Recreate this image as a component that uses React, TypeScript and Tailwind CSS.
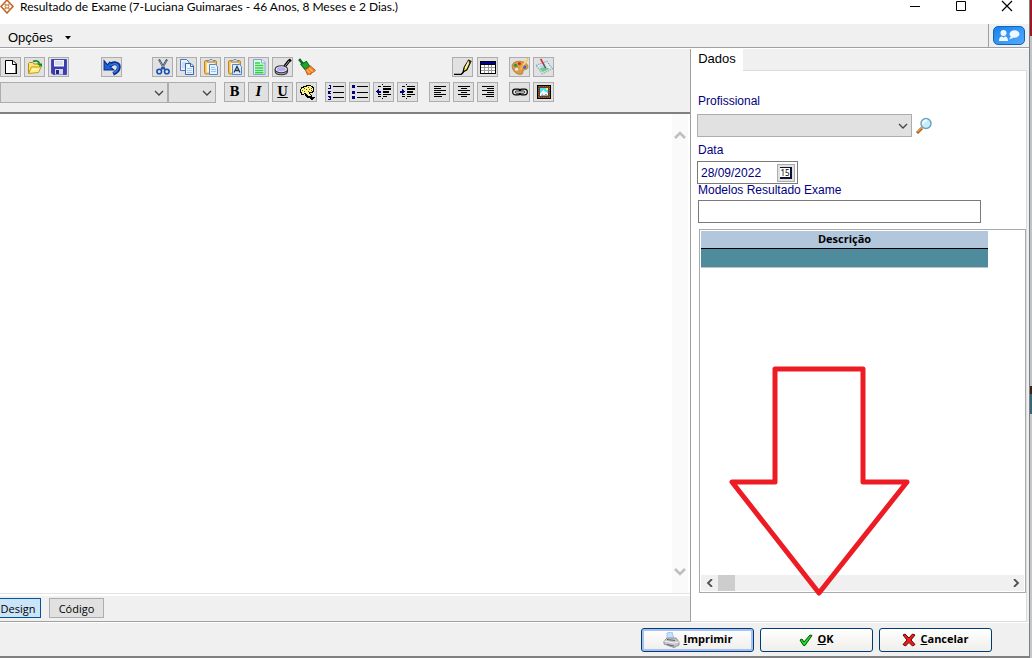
import React, { useState } from "react";
import type { ReactNode } from "react";

function Pic({ children, crisp = false, size = 16 }: { children: ReactNode; crisp?: boolean; size?: number }) {
  return (
    <svg width={size} height={size} viewBox="0 0 16 16" fill="none" aria-hidden="true" className="shrink-0" shapeRendering={crisp ? "crispEdges" : "auto"}>
      {children}
    </svg>
  );
}

function Chevron({ d, className }: { d: string; className?: string }) {
  return (
    <svg width="10" height="10" viewBox="0 0 10 10" fill="none" aria-hidden="true" className={className}>
      <path d={d} stroke="currentColor" strokeWidth="1.3" />
    </svg>
  );
}

const icons = {
  novo: (
    <Pic>
      <path d="M2.500 1.500h7.500l3.500 3.500v9.500h-11z" fill="#fff" stroke="#000" />
      <path d="M9.500 1.500v4h4M13 5v10M2 14.500h12" stroke="#000" />
    </Pic>
  ),
  abrir: (
    <Pic>
      <path d="M1.500 14V4.500l1-1h3l1.500 1.500h5.500v3" fill="#fbe577" stroke="#b98b10" />
      <path d="M1.500 14.500l3-6.500H14l-2.500 5.500z" fill="#fff08a" stroke="#c39a13" />
      <path d="M6 2.500c3-1.500 5.500-.5 6.500 2" stroke="#178a22" strokeWidth="1.800" />
      <path d="M9.500 4.500h5.500V8z" fill="#0d8a22" />
      <path d="M5 10.500h7" stroke="#fffbd0" />
    </Pic>
  ),
  salvar: (
    <Pic>
      <path d="M.5.500h15v15H2L.5 14z" fill="#3b3bb3" stroke="#4a4ab4" />
      <path d="M3 1h10v6.500H3z" fill="#f3f3fa" />
      <path d="M4 3h8M4 5h8" stroke="#c2c5d8" />
      <path d="M4 10h8v5.500H4z" fill="#d4d6e8" />
      <path d="M5 11h3v4H5z" fill="#24248b" />
    </Pic>
  ),
  desfazer: (
    <Pic size={18}>
      <path d="M5.500 7.500C9 2.800 14.500 4.500 14 8.500c-.2 2.500-2.500 4.500-5 5.500" stroke="#0a2f91" strokeWidth="3.400" />
      <path d="M1 2.500v8h8.500L6.500 8 9 6 6 3.500 4 6z" fill="#1762d6" stroke="#0a2f91" />
      <path d="M7 6.500c3-2.500 7-1.500 6.500 2-.3 2-2 3.800-4 4.800" stroke="#347fe5" strokeWidth="1.300" />
    </Pic>
  ),
  recortar: (
    <Pic>
      <path d="M4 .5l5.500 9.500M12 .5L6.500 10" stroke="#34425c" strokeWidth="2" />
      <path d="M4.500 1.500l4 7M11.500 1.500l-4 7" stroke="#a9b8cf" strokeWidth=".8" />
      <circle cx="4.200" cy="12.500" r="2.300" stroke="#1550b5" strokeWidth="1.600" />
      <circle cx="11.800" cy="12.500" r="2.300" stroke="#1550b5" strokeWidth="1.600" />
      <path d="M6 10.500l2-1.500 2 1.500" stroke="#1550b5" strokeWidth="1.500" />
    </Pic>
  ),
  copiar: (
    <Pic>
      <path d="M1.500.500h6l2.500 2.500v8.500h-8.500z" fill="#e9f3ff" stroke="#5277b6" />
      <path d="M3 4h4M3 6h4M3 8h4" stroke="#a9c6ee" />
      <path d="M6.500 4.500h5.500l2.500 2.500v8.500h-8z" fill="#eaf4ff" stroke="#3866ad" />
      <path d="M11.500 4.500V7.500h3" stroke="#3866ad" />
      <path d="M8 9.500h5M8 11.500h5M8 13.500h5" stroke="#a9cbf2" />
    </Pic>
  ),
  colar: (
    <Pic>
      <rect x="1.500" y="1.500" width="12" height="13.500" rx="1.500" fill="#f2bd50" stroke="#c08628" />
      <path d="M3.500 3.500h8v10h-8z" fill="#fff1ca" />
      <path d="M4.500 3V1.500h1.500L7 .500h2L10 1.500h1.500V3z" fill="#d9dce2" stroke="#81868f" />
      <path d="M6.500 5.500h6l2 2v8h-8z" fill="#e6f2ff" stroke="#5487c8" />
      <path d="M8 8.500h4M8 10.500h5M8 12.500h5" stroke="#9bc0eb" />
    </Pic>
  ),
  colarTexto: (
    <Pic>
      <rect x="1.500" y="1.500" width="12" height="13.500" rx="1.500" fill="#f2bd50" stroke="#c08628" />
      <path d="M3.500 3.500h8v10h-8z" fill="#fff1ca" />
      <path d="M4.500 3V1.500h1.500L7 .500h2L10 1.500h1.500V3z" fill="#d9dce2" stroke="#81868f" />
      <path d="M5.500 5.500h7l2 2v8h-9z" fill="#dcecff" stroke="#5487c8" />
      <path d="M7 13.500l3-6 3 6M8.500 11.500h3" stroke="#26384d" strokeWidth="1.300" />
    </Pic>
  ),
  documento: (
    <Pic>
      <path d="M2.500.500h8.500l3 3v12H2.500z" fill="#dff9e6" stroke="#7ba5d4" />
      <path d="M10.500.500v3.500H14" fill="#fff" stroke="#7ba5d4" />
      <path d="M4 4h5M4 6.500h8.500M4 9h8.500M4 11.500h8.500M4 13.700h8.500" stroke="#30d34a" strokeWidth="1.500" />
    </Pic>
  ),
  localizar: (
    <Pic size={18}>
      <path d="M9.500 7.500L13 3l2-1.500" stroke="#000" strokeWidth="2.600" />
      <path d="M10 7l3.500-4.500" stroke="#bbb" strokeWidth=".8" />
      <path d="M1 10v1.500c0 4.500 11 4.500 11 0V10" fill="#aaa5d0" stroke="#333" />
      <ellipse cx="6.500" cy="10" rx="5.500" ry="3.200" fill="#f0eefa" stroke="#333" strokeWidth=".9" />
      <ellipse cx="6.500" cy="10" rx="3.900" ry="1.900" fill="#b5afee" />
    </Pic>
  ),
  limpar: (
    <Pic size={18}>
      <path d="M1 1l4 5" stroke="#086a14" strokeWidth="2.200" />
      <path d="M2.500 5.500l5-2.500 3 4.500-4.500 2.500z" fill="#20a52d" stroke="#087519" />
      <path d="M6.500 10.500l4.500-3.500 4.500 4-1.800 1.500-1.700.5-.5 1.500-2-.2-1 .7z" fill="#f08628" stroke="#bf4b0c" strokeWidth=".8" />
      <path d="M8 10.500l2.500 3M10 9l3 3" stroke="#ffc36c" />
    </Pic>
  ),
  linha: (
    <Pic size={18}>
      <path d="M0 14.500h6.500l2-2" stroke="#000" strokeWidth="1.200" />
      <path d="M8 12.500L9 8.500l4-6.500 2 1-3.500 7.500z" fill="#f7e637" stroke="#000" />
      <path d="M12.500 1.500l3 1.500-1 2-2.700-1.500z" fill="#463018" />
      <path d="M10 9l3-6" stroke="#fffac1" />
    </Pic>
  ),
  tabela: (
    <Pic crisp>
      <path d="M0 2h16v13H0z" fill="#000" />
      <path d="M1 3h14v2H1z" fill="#00009b" />
      <path d="M1 6h14v8H1z" fill="#fff" />
      <path d="M4.500 6v8M8.500 6v8M11.500 6v8M1 8.500h14M1 11.500h14" stroke="#999" />
    </Pic>
  ),
  pintura: (
    <Pic size={18}>
      <path d="M1 7c0-3 4-4.500 8-4 4 .5 6.500 3 6 5.500-.4 2-3 1.500-4 2.500s.5 3-2 3.500C5 15 1 11.500 1 7z" fill="#d9994a" stroke="#b67c3a" strokeWidth=".8" />
      <circle cx="4" cy="6.500" r="1.500" fill="#289a42" />
      <circle cx="7.500" cy="5" r="1.300" fill="#d42320" />
      <circle cx="12" cy="8" r="1.500" fill="#3162c7" />
      <circle cx="5" cy="10" r="1.400" fill="#f5ede3" />
      <path d="M8 10.500L15 .5" stroke="#f0b541" strokeWidth="1.800" />
      <path d="M11 6l3.500-5" stroke="#ffe29a" />
    </Pic>
  ),
  desenho: (
    <Pic size={18}>
      <path d="M1 6.500l9.500-3.500 5 6.500-9 4.500z" fill="#d9edf6" stroke="#7791a0" strokeDasharray="1 1" />
      <path d="M4 9.500l4-2 5 2-6 3z" fill="#74c881" />
      <path d="M3.500 7l5-1.500 2 2-5 1.500z" fill="#a6dafa" />
      <path d="M5 .800l3.500 6.200" stroke="#c9303a" strokeWidth="1.500" />
      <path d="M8.500 7l.8 2" stroke="#3d3a3d" />
    </Pic>
  ),
  cores: (
    <Pic crisp>
      <path d="M4 2h3V1h5v1h2v1h1v5h-1v1h-3v1h1v1h1v2h-1v1H8v-1H7v-1H6v-2H5v1H2V9H1V5h1V3h2z" fill="#000" />
      <path d="M5 3h3V2h4v1h1v1h1v3h-1v1h-3v2h1v1h1v1H9v-1H8v-1H7V9H5v1H3V8H2V5h1V4h2z" fill="#fff683" />
      <path d="M5 4h1v1H5zM9 3h1v1H9zM12 4h1v1h-1zM3 6h1v1H3zM7 5h1v1H7zM10 5h1v1h-1zM5 7h1v1H5zM9 7h1v1H9zM12 6h1v1h-1z" fill="#5a4a10" />
      <path d="M10 13h6v1h-1v1h-1v1h-2v-1h-1v-1h-1z" fill="#000" />
    </Pic>
  ),
  numerada: (
    <Pic crisp>
      <path d="M1 1h1v3M0 4h3M0 7h2v1L0 9.500h3M0 12h2.500v1.500H1M2.500 13.500v2H0" stroke="#000080" />
      <path d="M5 2.500h11M5 8.500h11M5 13.500h11" stroke="#000" />
    </Pic>
  ),
  marcadores: (
    <Pic crisp>
      <path d="M0 1h3v3H0zM0 7h3v3H0zM0 12h3v3H0z" fill="#000080" />
      <path d="M5 2.500h11M5 8.500h11M5 13.500h11" stroke="#000" />
    </Pic>
  ),
  recuoMenos: (
    <Pic crisp>
      <path d="M0 7.500l3-3v2h2v2H3v2z" fill="#000080" />
      <path d="M2 2.500h3M7 2.500h8M2 10.500h3M7 10.500h8M2 12.500h3M7 12.500h4" stroke="#000" />
      <path d="M7 5h8M7 8h6" stroke="#000" strokeWidth="2" />
      <path d="M6 0h1v1H6zM6 14h1v1H6z" fill="#000" />
    </Pic>
  ),
  recuoMais: (
    <Pic crisp>
      <path d="M5 7.500l-3-3v2H0v2h2v2z" fill="#000080" />
      <path d="M2 2.500h3M7 2.500h8M2 10.500h3M7 10.500h8M2 12.500h3M7 12.500h4" stroke="#000" />
      <path d="M7 5h8M7 8h6" stroke="#000" strokeWidth="2" />
      <path d="M6 0h1v1H6zM6 14h1v1H6z" fill="#000" />
    </Pic>
  ),
  esquerda: <Pic crisp><path d="M2 2.500h12M2 4.500h7M2 6.500h12M2 8.500h7M2 10.500h12M2 12.500h8" stroke="#000" /></Pic>,
  centro: <Pic crisp><path d="M2 2.500h12M5 4.500h6M2 6.500h12M5 8.500h6M2 10.500h12M5 12.500h6" stroke="#000" /></Pic>,
  direita: <Pic crisp><path d="M2 2.500h12M7 4.500h7M2 6.500h12M7 8.500h7M2 10.500h12M6 12.500h8" stroke="#000" /></Pic>,
  vinculo: (
    <Pic>
      <rect x=".7" y="5.200" width="8" height="5.600" rx="2.500" stroke="#000" strokeWidth="1.200" />
      <rect x="7.300" y="5.200" width="8" height="5.600" rx="2.500" stroke="#000" strokeWidth="1.200" />
      <rect x="3.500" y="7" width="9" height="2.200" rx="1" fill="#fff" stroke="#000" strokeWidth=".9" />
    </Pic>
  ),
  imagem: (
    <Pic crisp>
      <path d="M1.500 1.500h13v13h-13z" fill="#54452c" stroke="#000" />
      <path d="M2.500 2.500h11v11h-11z" stroke="#b5532e" strokeDasharray="1 1" />
      <path d="M4 4h8v8H4z" fill="#50e1f3" />
      <path d="M4 10l3-4 2 2 1-1 2 3v2H4z" fill="#f5f5f5" />
      <path d="M4 12l2-2 2 1 2-2 2 3z" fill="#9aa39e" />
      <path d="M10 4h2v2h-2z" fill="#fff45e" />
    </Pic>
  ),
};

function Tool({ label, children, flat = false, onClick }: { label: string; children: ReactNode; flat?: boolean; onClick?: () => void }) {
  return (
    <button
      type="button"
      aria-label={label}
      title={label}
      onClick={onClick}
      className={flat ? "flex h-5 w-[21px] items-center justify-center" : "flex h-5 w-[21px] items-center justify-center border border-[#adadad] bg-[#e1e1e1] text-black"}
    >
      {children}
    </button>
  );
}

function Group({ children }: { children: ReactNode }) {
  return <div className="flex shrink-0 gap-[3px]">{children}</div>;
}

function Drop({ label, id, className }: { label?: string; id: string; className: string }) {
  return (
    <div className={"relative " + className}>
      <select id={id} aria-label={label} className="block h-full w-full appearance-none border border-[#adadad] bg-[#e1e1e1] px-1 text-xs" defaultValue="">
        <option value=""></option>
      </select>
      <Chevron d="M1 3l4 4 4-4" className="pointer-events-none absolute inset-y-0 right-1 my-auto text-[#444]" />
    </div>
  );
}

const actionClass = "flex h-6 w-[113px] items-center justify-center gap-1 rounded-[3px] border border-[#003c74] bg-gradient-to-b from-white to-[#efeeea] font-['Open_Sans','Noto_Sans',sans-serif] text-[11px] font-bold text-black";

export default function App() {
  const [date, setDate] = useState("28/09/2022");
  const [text, setText] = useState("");
  return (
    <div className="flex min-h-screen bg-[#f0f0f0] font-['Liberation_Sans',Arial,sans-serif] text-black">
      <div className="flex min-w-0 flex-1 flex-col border-r border-b-2 border-[#808080]">
        <header className="flex h-6 shrink-0 items-start justify-between bg-white">
          <div className="flex items-center gap-1">
            <svg width="16" height="14" viewBox="0 0 16 14" fill="none" aria-hidden="true">
              <path d="M7 0l6 6.500L7 13 1 6.500z" stroke="#bd6023" strokeWidth="1.500" />
              <path d="M4 3l6 7M10 3l-6 7" stroke="#d98a4e" strokeWidth="1.400" />
              <path d="M7 4.500l2 2-2 2-2-2z" fill="#fff" stroke="#bd6023" />
            </svg>
            <h1 className="font-['Lato','Open_Sans',sans-serif] text-xs leading-[14px]">Resultado de Exame (7-Luciana Guimaraes - 46 Anos, 8 Meses e 2 Dias.)</h1>
          </div>
          <div className="flex gap-[34px] pr-4">
            <button type="button" aria-label="Minimizar">
              <svg width="12" height="12" viewBox="0 0 12 12"><path d="M1 6.500h10" stroke="#000" /></svg>
            </button>
            <button type="button" aria-label="Maximizar">
              <svg width="12" height="12" viewBox="0 0 12 12"><path d="M1.500 1.500h9v9h-9z" fill="none" stroke="#000" /></svg>
            </button>
            <button type="button" aria-label="Fechar">
              <svg width="12" height="12" viewBox="0 0 12 12"><path d="M1 1l10 10M11 1L1 11" stroke="#000" strokeWidth="1.200" /></svg>
            </button>
          </div>
        </header>

        <nav className="flex h-6 shrink-0 items-center justify-between border-b border-[#a0a0a0]">
          <button type="button" className="flex items-center gap-3 pt-1 pl-2 text-[13px] leading-4">
            Opções
            <svg width="6" height="4" viewBox="0 0 6 4" aria-hidden="true"><path d="M0 0h6L3 3.500z" fill="#000" /></svg>
          </button>
          <div className="flex h-full items-center border-l border-[#a0a0a0] pr-1 pl-1">
            <button type="button" aria-label="Suporte" className="flex h-[19px] w-8 items-center justify-center rounded-[5px] border border-[#0867c2] bg-gradient-to-br from-[#1681e8] to-[#52aaff]">
              <svg width="24" height="14" viewBox="0 0 24 14" fill="#eef8ff" aria-hidden="true">
                <circle cx="6.500" cy="4" r="3" />
                <path d="M2 12c0-3 1-4.500 3-4.500l1.500 1L8 7.500c2 0 3 1.500 3 4.500z" />
                <ellipse cx="17.500" cy="5" rx="5" ry="3.700" />
                <path d="M14 7l-2 3.500 5-2z" />
              </svg>
            </button>
          </div>
        </nav>

        <main className="flex flex-1 border-t border-white">
          <section className="flex min-w-0 flex-1 flex-col border-r border-b border-[#a0a0a0]">
            <div className="flex h-[65px] shrink-0 flex-col gap-[5px] border-b-2 border-[#808080] pt-2">
              <div className="flex items-start">
                <Group>
                  <Tool label="Novo">{icons.novo}</Tool>
                  <Tool label="Abrir">{icons.abrir}</Tool>
                  <Tool label="Salvar">{icons.salvar}</Tool>
                </Group>
                <div className="ml-8"><Tool label="Desfazer">{icons.desfazer}</Tool></div>
                <div className="ml-[30px]">
                  <Group>
                    <Tool label="Recortar">{icons.recortar}</Tool>
                    <Tool label="Copiar">{icons.copiar}</Tool>
                    <Tool label="Colar">{icons.colar}</Tool>
                    <Tool label="Colar texto">{icons.colarTexto}</Tool>
                    <Tool label="Selecionar tudo">{icons.documento}</Tool>
                    <Tool label="Localizar">{icons.localizar}</Tool>
                    <Tool label="Limpar formatação" flat onClick={() => setText("")}>{icons.limpar}</Tool>
                  </Group>
                </div>
                <div className="ml-[135px] flex gap-1">
                  <Tool label="Linha">{icons.linha}</Tool>
                  <Tool label="Tabela">{icons.tabela}</Tool>
                </div>
                <div className="ml-[11px]">
                  <Group>
                    <Tool label="Pintura">{icons.pintura}</Tool>
                    <Tool label="Desenho">{icons.desenho}</Tool>
                  </Group>
                </div>
              </div>
              <div className="flex items-start">
                <Drop id="fonte" label="Fonte" className="h-[21px] w-[168px]" />
                <Drop id="tamanho" label="Tamanho" className="h-[21px] w-12" />
                <div className="ml-2 font-['DejaVu_Serif',serif] text-xs font-bold">
                  <Group>
                    <Tool label="Negrito">B</Tool>
                    <Tool label="Itálico"><i>I</i></Tool>
                    <Tool label="Sublinhado"><u>U</u></Tool>
                    <Tool label="Cores">{icons.cores}</Tool>
                  </Group>
                </div>
                <div className="ml-2">
                  <Group>
                    <Tool label="Lista numerada">{icons.numerada}</Tool>
                    <Tool label="Marcadores">{icons.marcadores}</Tool>
                    <Tool label="Diminuir recuo">{icons.recuoMenos}</Tool>
                    <Tool label="Aumentar recuo">{icons.recuoMais}</Tool>
                  </Group>
                </div>
                <div className="ml-[11px]">
                  <Group>
                    <Tool label="Alinhar à esquerda">{icons.esquerda}</Tool>
                    <Tool label="Centralizar">{icons.centro}</Tool>
                    <Tool label="Alinhar à direita">{icons.direita}</Tool>
                  </Group>
                </div>
                <div className="ml-[11px]">
                  <Group>
                    <Tool label="Vínculo">{icons.vinculo}</Tool>
                    <Tool label="Imagem">{icons.imagem}</Tool>
                  </Group>
                </div>
              </div>
            </div>

            <div className="flex flex-1 border-b border-[#e3e3e3] bg-white">
              <textarea aria-label="Resultado" value={text} onChange={(e) => setText(e.target.value)} className="min-w-0 flex-1 resize-none p-2 text-sm outline-none" />
              <div className="mr-[2px] flex w-4 flex-col items-center justify-between bg-[#fafafa] pt-4 pb-4 text-[#bfbfbf]">
                <button type="button" aria-label="Rolar para cima">
                  <svg width="12" height="10" viewBox="0 0 12 10" fill="none"><path d="M1 8l5-5 5 5" stroke="currentColor" strokeWidth="2.600" /></svg>
                </button>
                <button type="button" aria-label="Rolar para baixo">
                  <svg width="12" height="10" viewBox="0 0 12 10" fill="none"><path d="M1 2l5 5 5-5" stroke="currentColor" strokeWidth="2.600" /></svg>
                </button>
              </div>
            </div>

            <div className="flex h-[27px] shrink-0 items-start gap-2 border-t-2 border-white pt-[2px] font-['Open_Sans','Noto_Sans',sans-serif] text-[11px]">
              <button type="button" className="h-5 w-[41px] border border-l-0 border-[#005499] bg-[#cce4f7] pr-1 leading-5">Design</button>
              <button type="button" className="h-5 w-[55px] border border-[#adadad] bg-[#e1e1e1] leading-5">Código</button>
            </div>
          </section>

          <section className="flex w-[338px] shrink-0 flex-col pr-[2px]">
            <div className="flex h-[22px] shrink-0 items-end">
              <button type="button" className="flex h-[22px] w-[52px] justify-center bg-white text-[13px] leading-5">Dados</button>
              <div className="flex-1 border-b border-[#dcdcdc]" />
            </div>
            <form className="flex flex-1 flex-col border-r border-b border-[#dcdcdc] bg-white pt-6 pb-7 pl-[6px] text-[12px] leading-3 text-[#000080]" onSubmit={(e) => e.preventDefault()}>
              <label htmlFor="profissional" className="pl-px">Profissional</label>
              <div className="mt-[7px] flex items-center gap-1">
                <Drop id="profissional" className="h-[23px] w-[215px]" />
                <button type="button" aria-label="Pesquisar profissional">
                  <svg width="16" height="18" viewBox="0 0 16 18" fill="none" aria-hidden="true">
                    <path d="M6 11l-5 5" stroke="#a95417" strokeWidth="3" />
                    <path d="M6 10.500l-4.500 4.500" stroke="#f39a35" strokeWidth="1.500" />
                    <circle cx="10" cy="6.500" r="5" fill="#c8edfa" stroke="#689fc5" strokeWidth="1.400" />
                    <path d="M7 7c0-3 2-4 4-3.500" stroke="#fff" strokeWidth="1.800" />
                  </svg>
                </button>
              </div>
              <label htmlFor="data" className="mt-[7px] pl-px">Data</label>
              <div className="mt-[5px] flex h-[23px] w-[101px] items-center border border-[#7a7a7a] pr-[2px]">
                <input id="data" value={date} onChange={(e) => setDate(e.target.value)} className="min-w-0 flex-1 pl-[3px] text-[12px] leading-4 outline-none" />
                <button type="button" aria-label="Abrir calendário" className="flex h-[18px] w-[18px] items-center justify-center border border-[#adadad] bg-[#e1e1e1]">
                  <span className="h-3 w-3 border-t border-r-2 border-b-2 border-[#101030] bg-white font-['Noto_Sans',sans-serif] text-[8px] leading-[9px] text-black">15</span>
                </button>
              </div>
              <label htmlFor="modelos" className="pl-px">Modelos Resultado Exame</label>
              <input id="modelos" className="mt-1 ml-px h-[23px] w-[283px] border border-[#7a7a7a] px-1 outline-none" />
              <div className="relative mt-[6px] ml-[2px] flex flex-1 flex-col justify-between border border-[#a9a9b0] p-px">
                <table className="w-[287px] table-fixed border-collapse font-['Open_Sans','Noto_Sans',sans-serif] text-[11px] text-black">
                  <thead>
                    <tr className="h-[17px] border-b border-black bg-[#b3c7dc]">
                      <th scope="col" className="p-0 leading-4 font-bold">Descrição</th>
                    </tr>
                  </thead>
                  <tbody>
                    <tr className="h-[19px] border-b border-[#c0c0c0] bg-[#4d8b9d]">
                      <td className="p-0"></td>
                    </tr>
                  </tbody>
                </table>
                <div className="flex h-4 items-center bg-[#f0f0f0] text-[#505050]">
                  <button type="button" aria-label="Rolar para a esquerda" className="flex h-full w-[17px] items-center justify-center">
                    <svg width="8" height="8" viewBox="0 0 8 8" fill="none"><path d="M6 0L2 4l4 4" stroke="currentColor" strokeWidth="1.800" /></svg>
                  </button>
                  <div className="h-full w-[17px] bg-[#cdcdcd]" />
                  <div className="flex-1" />
                  <button type="button" aria-label="Rolar para a direita" className="flex h-full w-[17px] items-center justify-center">
                    <svg width="8" height="8" viewBox="0 0 8 8" fill="none"><path d="M2 0l4 4-4 4" stroke="currentColor" strokeWidth="1.800" /></svg>
                  </button>
                </div>
                <svg width="184" height="234" viewBox="0 0 184 234" fill="none" aria-hidden="true" className="pointer-events-none absolute -bottom-1 left-7">
                  <path d="M47 7h88v113h44L91 231 4 120h43z" stroke="#ed1c24" strokeWidth="5" strokeLinejoin="round" />
                </svg>
              </div>
            </form>
          </section>
        </main>

        <footer className="flex h-[34px] shrink-0 items-center justify-end gap-[6px] border-t border-white pr-[37px]">
          <button type="button" className={actionClass + " shadow-[inset_0_0_0_2px_#a8c0f2]"}>
            <svg width="17" height="16" viewBox="0 0 17 16" fill="none" aria-hidden="true">
              <path d="M4 7V1l5-1 2 7z" fill="#c8e0ff" stroke="#a3c2f0" />
              <path d="M1 9l3-3h9l3 4v3l-5 2.500L1 12z" fill="#c2c4c9" stroke="#909399" />
              <path d="M1 9l10 2 5-1" stroke="#f5f5f5" />
              <path d="M4 12.500l7 1.500M4 7.500l8 1" stroke="#666" />
            </svg>
            <span><u>I</u>mprimir</span>
          </button>
          <button type="button" className={actionClass}>
            <svg width="14" height="14" viewBox="0 0 14 14" aria-hidden="true">
              <path d="M1 7l2-1 2 3 6-7 2 .5-7 10H4.500z" fill="#10e51b" stroke="#064b0a" />
            </svg>
            <span><u>O</u>K</span>
          </button>
          <button type="button" className={actionClass}>
            <svg width="14" height="14" viewBox="0 0 14 14" aria-hidden="true">
              <path d="M1 2l2-1 4 4 3.500-4 2.500 1-4 5 4 4.500-2.500 1.500L7 9.500 3.500 13 1 11.500 5 7z" fill="#f01c1c" stroke="#5b0808" />
            </svg>
            <span><u>C</u>ancelar</span>
          </button>
        </footer>
      </div>
      <div className="flex w-[2px] shrink-0 flex-col bg-[#c5c7ca]" aria-hidden="true">
        <div className="h-9 bg-[#9c1721]" />
        <div className="h-[350px] bg-[#bfc4c9]" />
        <div className="h-2 bg-[#3a2418]" />
        <div className="h-5 bg-[#346878]" />
      </div>
    </div>
  );
}
